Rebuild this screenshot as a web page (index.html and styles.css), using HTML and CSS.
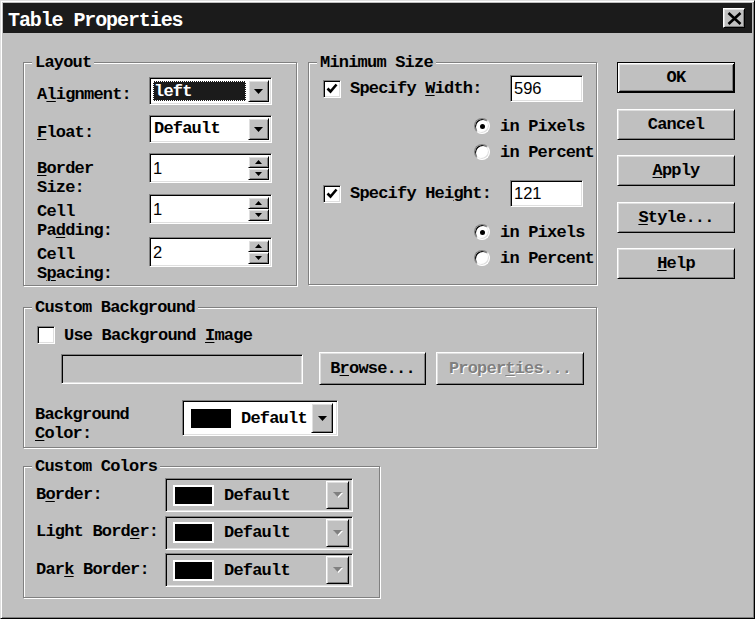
FILE: index.html
```html
<!DOCTYPE html>
<html lang="en">
<head>
<meta charset="utf-8">
<title>Table Properties</title>
<link rel="stylesheet" href="styles.css">
</head>
<body>
<div class="window">
  <header class="titlebar">
    <span class="title">Table Properties</span>
    <button class="close-btn raised" type="button" aria-label="Close">
      <svg width="15" height="13" viewBox="0 0 15 13"><path d="M1.5 1L13.5 12M13.5 1L1.5 12" stroke="#000" stroke-width="2.6" fill="none"/></svg>
    </button>
  </header>

  <div class="client">
    <div class="panels">
      <div class="panel-row">
        <!-- Layout -->
        <fieldset class="group group-layout">
          <legend>Layout</legend>
          <div class="layout-grid">
            <span class="lbl">A<u>l</u>ignment:</span>
            <div class="combo sunken">
              <span class="combo-value selected">left</span>
              <span class="drop-btn raised"><svg width="9" height="5" viewBox="0 0 9 5"><path d="M0 0H9L4.5 5Z"/></svg></span>
            </div>

            <span class="lbl"><u>F</u>loat:</span>
            <div class="combo sunken">
              <span class="combo-value">Default</span>
              <span class="drop-btn raised"><svg width="9" height="5" viewBox="0 0 9 5"><path d="M0 0H9L4.5 5Z"/></svg></span>
            </div>

            <span class="lbl lbl-tight"><u>B</u>order<br>Size:</span>
            <div class="spin sunken">
              <span class="spin-value">1</span>
              <span class="spin-btns">
                <span class="spin-btn raised"><svg width="7" height="4" viewBox="0 0 7 4"><path d="M3.5 0L7 4H0Z"/></svg></span>
                <span class="spin-btn raised"><svg width="7" height="4" viewBox="0 0 7 4"><path d="M0 0H7L3.5 4Z"/></svg></span>
              </span>
            </div>

            <span class="lbl">Cell<br>Pa<u>d</u>ding:</span>
            <div class="spin sunken">
              <span class="spin-value">1</span>
              <span class="spin-btns">
                <span class="spin-btn raised"><svg width="7" height="4" viewBox="0 0 7 4"><path d="M3.5 0L7 4H0Z"/></svg></span>
                <span class="spin-btn raised"><svg width="7" height="4" viewBox="0 0 7 4"><path d="M0 0H7L3.5 4Z"/></svg></span>
              </span>
            </div>

            <span class="lbl">Cell<br>S<u>p</u>acing:</span>
            <div class="spin sunken">
              <span class="spin-value">2</span>
              <span class="spin-btns">
                <span class="spin-btn raised"><svg width="7" height="4" viewBox="0 0 7 4"><path d="M3.5 0L7 4H0Z"/></svg></span>
                <span class="spin-btn raised"><svg width="7" height="4" viewBox="0 0 7 4"><path d="M0 0H7L3.5 4Z"/></svg></span>
              </span>
            </div>
          </div>
        </fieldset>

        <!-- Minimum Size -->
        <fieldset class="group group-minsize">
          <legend>Minimum Size</legend>
          <div class="minsize-body">
            <div class="check-row">
              <span class="check sunken"><svg width="12" height="11" viewBox="0 0 12 11"><path d="M1.5 5.5L4.5 8.5L10.5 1.5" stroke="#000" stroke-width="2.6" fill="none"/></svg></span>
              <span class="check-label">Specify <u>W</u>idth:</span>
              <span class="num-input sunken">596</span>
            </div>
            <div class="radio-row radio-first">
              <span class="radio on"></span><span class="radio-label">in Pixels</span>
            </div>
            <div class="radio-row">
              <span class="radio"></span><span class="radio-label">in Percent</span>
            </div>
            <div class="check-row check-second">
              <span class="check sunken"><svg width="12" height="11" viewBox="0 0 12 11"><path d="M1.5 5.5L4.5 8.5L10.5 1.5" stroke="#000" stroke-width="2.6" fill="none"/></svg></span>
              <span class="check-label">Specify Hei<u>g</u>ht:</span>
              <span class="num-input sunken">121</span>
            </div>
            <div class="radio-row radio-third">
              <span class="radio on"></span><span class="radio-label">in Pixels</span>
            </div>
            <div class="radio-row">
              <span class="radio"></span><span class="radio-label">in Percent</span>
            </div>
          </div>
        </fieldset>
      </div>

      <!-- Custom Background -->
      <fieldset class="group group-bg">
        <legend>Custom Background</legend>
        <div class="bg-body">
          <div class="check-row bg-check">
            <span class="check sunken"></span>
            <span class="check-label">Use Background <u>I</u>mage</span>
          </div>
          <div class="file-row">
            <span class="text-field sunken"></span>
            <button class="btn raised btn-browse" type="button">B<u>r</u>owse...</button>
            <button class="btn raised btn-props" type="button" disabled>Proper<u>t</u>ies...</button>
          </div>
          <div class="color-row">
            <span class="lbl">Background<br><u>C</u>olor:</span>
            <div class="color-combo sunken">
              <span class="swatch"></span>
              <span class="color-name">Default</span>
              <span class="drop-btn raised"><svg width="9" height="5" viewBox="0 0 9 5"><path d="M0 0H9L4.5 5Z"/></svg></span>
            </div>
          </div>
        </div>
      </fieldset>

      <!-- Custom Colors -->
      <fieldset class="group group-colors">
        <legend>Custom Colors</legend>
        <div class="colors-body">
          <span class="lbl-row">B<u>o</u>rder:</span>
          <div class="color-combo sunken disabled">
            <span class="swatch framed"></span>
            <span class="color-name">Default</span>
            <span class="drop-btn raised"><svg width="10" height="6" viewBox="0 0 10 6"><path d="M1 1H10L5.5 6Z" fill="#fff"/><path d="M0 0H9L4.5 5Z" fill="#808080"/></svg></span>
          </div>

          <span class="lbl-row">Light Bord<u>e</u>r:</span>
          <div class="color-combo sunken disabled">
            <span class="swatch framed"></span>
            <span class="color-name">Default</span>
            <span class="drop-btn raised"><svg width="10" height="6" viewBox="0 0 10 6"><path d="M1 1H10L5.5 6Z" fill="#fff"/><path d="M0 0H9L4.5 5Z" fill="#808080"/></svg></span>
          </div>

          <span class="lbl-row">Dar<u>k</u> Border:</span>
          <div class="color-combo sunken disabled">
            <span class="swatch framed"></span>
            <span class="color-name">Default</span>
            <span class="drop-btn raised"><svg width="10" height="6" viewBox="0 0 10 6"><path d="M1 1H10L5.5 6Z" fill="#fff"/><path d="M0 0H9L4.5 5Z" fill="#808080"/></svg></span>
          </div>
        </div>
      </fieldset>
    </div>

    <!-- Dialog buttons -->
    <div class="buttons">
      <button class="btn btn-side btn-default" type="button">OK</button>
      <button class="btn btn-side raised" type="button">Cancel</button>
      <button class="btn btn-side raised" type="button"><u>A</u>pply</button>
      <button class="btn btn-side raised" type="button"><u>S</u>tyle...</button>
      <button class="btn btn-side raised" type="button"><u>H</u>elp</button>
    </div>
  </div>
</div>
</body>
</html>
```

FILE: styles.css
```css
* { box-sizing: border-box; }

html, body { margin: 0; padding: 0; }

body {
  width: 755px;
  height: 619px;
  overflow: hidden;
  background: #c0c0c0;
  color: #000;
  font-family: "Liberation Mono", "DejaVu Sans Mono", monospace;
  font-size: 17px;
  font-weight: bold;
  letter-spacing: -0.8px;
  line-height: 19px;
}

u {
  text-decoration-thickness: 1px;
  text-underline-offset: 2px;
}

/* 3D bevels of the classic theme */
.raised {
  background: #c0c0c0;
  border: 1px solid;
  border-color: #fff #000 #000 #fff;
  box-shadow: inset 1px 1px #dfdfdf, inset -1px -1px #808080;
}

.sunken {
  border: 1px solid;
  border-color: #808080 #fff #fff #808080;
  box-shadow: inset 1px 1px #000, inset -1px -1px #dfdfdf;
}

/* Window frame */
.window {
  width: 755px;
  height: 619px;
  display: flex;
  flex-direction: column;
  padding: 2px;
  border: 1px solid;
  border-color: #dfdfdf #000 #000 #dfdfdf;
  box-shadow: inset 1px 1px #fff, inset -1px -1px #808080;
  background: #c0c0c0;
}

.titlebar {
  flex: none;
  height: 30px;
  display: flex;
  align-items: center;
  justify-content: space-between;
  padding: 0 7px 0 5px;
  background: #1b1b1b;
}

.title {
  color: #fff;
  font-size: 20px;
  letter-spacing: -1.1px;
  line-height: 30px;
  margin-top: 6px;
}

.close-btn {
  width: 22px;
  height: 20px;
  margin: 0;
  padding: 0;
  display: flex;
  align-items: center;
  justify-content: center;
}

/* Client area */
.client {
  flex: 1;
  display: flex;
  align-items: flex-start;
  padding: 20px 0 0 20px;
}

.panels {
  flex: none;
  width: 574px;
  display: flex;
  flex-direction: column;
}

.panel-row {
  display: flex;
  gap: 11px;
}

/* Etched group boxes */
.group {
  margin: 0;
  padding: 0;
  min-width: 0;
  border: 1px solid #808080;
  box-shadow: inset 1px 1px #fff, 1px 1px #fff;
}

.group legend {
  margin-left: 8px;
  padding: 0 3px;
  line-height: 19px;
  background: #c0c0c0;
}

.group-layout { width: 274px; height: 233px; }
.group-minsize { width: 289px; height: 232px; }
.group-bg { width: 574px; height: 150px; margin-top: 12px; }
.group-colors { width: 357px; height: 141px; margin-top: 9px; }

/* Layout group */
.layout-grid {
  display: grid;
  grid-template-columns: 112px 123px;
  grid-template-rows: 38px 38px 41px 43px 30px;
  padding: 5px 0 0 13px;
}

.lbl {
  align-self: start;
  padding-top: 8px;
  white-space: nowrap;
}

.lbl-tight { padding-top: 6px; }

.combo {
  height: 28px;
  display: flex;
  padding: 2px;
  background: #fff;
}

.combo-value {
  flex: 1;
  padding-left: 2px;
  line-height: 22px;
  white-space: nowrap;
}

.combo-value.selected {
  margin: 1px 2px 1px 1px;
  padding-left: 1px;
  background: #1b1b1b;
  color: #fff;
  outline: 1px dotted #fff;
  outline-offset: -1px;
}

.drop-btn {
  flex: none;
  width: 21px;
  display: flex;
  align-items: center;
  justify-content: center;
}

.spin {
  height: 30px;
  display: flex;
  padding: 2px;
  background: #fff;
}

.spin-value {
  flex: 1;
  padding-left: 1px;
  font-family: "Liberation Sans", Arial, sans-serif;
  font-weight: normal;
  font-size: 16.5px;
  letter-spacing: 0;
  line-height: 24px;
}

.spin-btns {
  flex: none;
  width: 21px;
  display: flex;
  flex-direction: column;
}

.spin-btn {
  flex: 1;
  display: flex;
  align-items: center;
  justify-content: center;
}

/* Minimum size group */
.minsize-body {
  padding: 3px 13px 0 14px;
}

.check-row {
  display: flex;
  align-items: center;
  height: 27px;
}

.check {
  flex: none;
  width: 18px;
  height: 18px;
  display: flex;
  align-items: center;
  justify-content: center;
  background: #fff;
}

.check-label {
  margin-left: 9px;
  white-space: nowrap;
}

.num-input {
  margin-left: auto;
  width: 73px;
  height: 27px;
  padding-left: 3px;
  background: #fff;
  font-family: "Liberation Sans", Arial, sans-serif;
  font-weight: normal;
  font-size: 16.5px;
  letter-spacing: 0;
  line-height: 24px;
}

.check-second { margin-top: 15px; }

.radio-row {
  display: flex;
  align-items: center;
  height: 26px;
  padding-left: 151px;
}

.radio-first { margin-top: 11px; }
.radio-third { margin-top: 12px; }

.radio {
  flex: none;
  width: 16px;
  height: 16px;
  display: grid;
  place-items: center;
  border-radius: 50%;
  background: #fff;
  border: 1px solid;
  border-color: #808080 #fff #fff #808080;
  box-shadow: inset 1px 1px #000, inset -1px -1px #dfdfdf;
}

.radio.on::after {
  content: "";
  width: 5px;
  height: 5px;
  border-radius: 50%;
  background: #000;
}

.radio-label {
  margin-left: 10px;
  white-space: nowrap;
}

/* Custom background group */
.bg-body {
  padding: 9px 0 0 13px;
}

.bg-check { height: 18px; }

.file-row {
  display: flex;
  align-items: center;
  height: 33px;
  margin-top: 8px;
  padding-left: 24px;
}

.text-field {
  width: 242px;
  height: 30px;
  background: #c0c0c0;
}

.btn {
  margin: 0;
  padding: 0;
  height: 33px;
  display: flex;
  align-items: center;
  justify-content: center;
  font: inherit;
  letter-spacing: inherit;
  color: #000;
}

.btn-browse { width: 107px; margin-left: 16px; }
.btn-props { width: 148px; margin-left: 10px; }

.btn:disabled {
  color: #808080;
  text-shadow: 1px 1px #fff;
}

.color-row {
  display: flex;
  margin-top: 15px;
}

.color-row .lbl {
  width: 147px;
  margin-left: -2px;
  padding-top: 5px;
}

.color-combo {
  width: 156px;
  height: 36px;
  display: flex;
  align-items: center;
  padding: 2px;
  background: #fff;
}

.swatch {
  flex: none;
  width: 40px;
  height: 19px;
  margin-left: 6px;
  background: #000;
}

.color-name {
  margin-left: 10px;
  white-space: nowrap;
}

.color-combo .drop-btn {
  width: 22px;
  height: 30px;
  margin-left: auto;
  margin-right: 2px;
}

/* Custom colors group */
.colors-body {
  display: grid;
  grid-template-columns: 129px 188px;
  grid-auto-rows: 34px;
  row-gap: 3.5px;
  align-items: center;
  padding: 2px 0 0 12px;
}

.lbl-row {
  white-space: nowrap;
  padding-bottom: 2px;
}

.color-combo.disabled {
  width: 188px;
  height: 34px;
  background: #c0c0c0;
}

.swatch.framed {
  width: 41px;
  height: 21px;
  margin-left: 5px;
  border: 2px solid #fff;
}

.color-combo.disabled .drop-btn {
  width: 23px;
  height: 28px;
  margin-right: 1px;
}

/* Dialog button column */
.buttons {
  flex: none;
  width: 118px;
  display: flex;
  flex-direction: column;
  gap: 15.5px;
  margin: 9px 0 0 20px;
}

.btn-side { height: 31px; width: 118px; }

.btn-default {
  background: #c0c0c0;
  border: 1px solid #000;
  box-shadow: inset 1px 1px #fff, inset -1px -1px #000, inset 2px 2px #dfdfdf, inset -2px -2px #808080;
}
```
